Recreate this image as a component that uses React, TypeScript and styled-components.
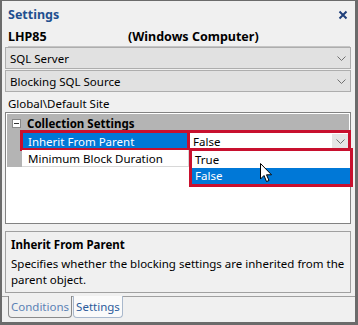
import React from "react";
import styled, { createGlobalStyle } from "styled-components";

const Global = createGlobalStyle`
  html, body { margin: 0; padding: 0; background: #f0f0f0; }
  * { box-sizing: border-box; }
  body { font-family: "Noto Sans", "Open Sans", sans-serif; font-size: 11.5px; color: #000; }
`;

const RED = "#c8102e";
const BLUE = "#0078d7";

const Frame = styled.div`
  position: relative;
  width: 358px;
  height: 325px;
  background: #f0f0f0;
  border-style: solid;
  border-color: #6b6b6b;
  border-width: 1px 3px 3px 2px;
  display: flex;
  flex-direction: column;
  overflow: hidden;
`;

const TitleBar = styled.div`
  height: 26px;
  display: flex;
  align-items: center;
  justify-content: space-between;
  padding: 1px 7px 0 6px;
`;

const Title = styled.div`
  color: #1f4f8f;
  font-weight: bold;
  font-size: 12.5px;
`;

const Close = styled.div`
  width: 10px;
  height: 10px;
  display: flex;
`;

const Machine = styled.div`
  margin: 0 5px 0 6px;
  height: 20px;
  display: flex;
  align-items: center;
  font-weight: bold;
  font-size: 12.5px;
  border-bottom: 1px solid #c4c4c4;
`;

const MachineName = styled.span`
  width: 120px;
`;

const Combo = styled.div`
  margin: 0 4px 1px 3px;
  height: 22px;
  background: #e1e1e1;
  border: 1px solid #adadad;
  display: flex;
  align-items: center;
  justify-content: space-between;
  padding: 0 4px 0 4px;
  &:first-of-type { margin-top: 2px; }
`;

const Chevron = ({ color = "#707070" }: { color?: string }) => (
  <svg width="9" height="5" viewBox="0 0 9 5">
    <path d="M0.5 0.5 L4.5 4.5 L8.5 0.5" fill="none" stroke={color} strokeWidth="1" />
  </svg>
);

const Path = styled.div`
  height: 19px;
  padding-left: 6px;
  padding-top: 2px;
  display: flex;
  align-items: center;
  font-size: 11.5px;
`;

const Grid = styled.div`
  position: relative;
  margin: 0 4px 0 3px;
  height: 112px;
  background: #fff;
  border: 1px solid #828282;
  display: flex;
  flex-direction: column;
`;

const Category = styled.div`
  height: 19px;
  background: #b4b4b4;
  display: flex;
  align-items: center;
  font-weight: bold;
  margin: 1px 1px 0 1px;
`;

const Toggle = styled.div`
  width: 9px;
  height: 9px;
  margin: 0 6px 0 5px;
  background: #fff;
  border: 1px solid #888;
  display: flex;
  align-items: center;
  justify-content: center;
  &::after { content: ""; width: 5px; height: 1px; background: #333; }
`;

const Row = styled.div`
  height: 17px;
  display: flex;
  margin: 0 1px;
`;

const Gutter = styled.div`
  width: 15px;
  background: #b4b4b4;
`;

const Label = styled.div<{ $selected?: boolean }>`
  position: relative;
  width: 166px;
  padding-left: 6px;
  display: flex;
  align-items: center;
  background: ${(p) => (p.$selected ? BLUE : "#fff")};
  color: ${(p) => (p.$selected ? "#fff" : "#000")};
  border-bottom: 1px solid ${(p) => (p.$selected ? BLUE : "#d8d8d8")};
`;

const Value = styled.div`
  position: relative;
  flex: 1;
  display: flex;
  align-items: center;
  justify-content: space-between;
  padding-left: 4px;
  background: #fff;
  border-bottom: 1px solid #d8d8d8;
  border-left: 1px solid #d8d8d8;
`;

const DropButton = styled.div`
  width: 16px;
  height: 15px;
  background: #e5e5e5;
  display: flex;
  align-items: center;
  justify-content: center;
  margin-right: 1px;
`;

const Highlight = styled.div`
  position: absolute;
  inset: -3px -2px -2px -2px;
  border: 3px solid ${RED};
  pointer-events: none;
`;

const List = styled.div`
  position: absolute;
  left: 183px;
  top: 35px;
  width: 164px;
  height: 39px;
  border: 3px solid ${RED};
  background: #fff;
  display: flex;
  flex-direction: column;
  z-index: 2;
`;

const Option = styled.div<{ $active?: boolean }>`
  flex: 1;
  display: flex;
  align-items: center;
  padding-left: 3px;
  background: ${(p) => (p.$active ? BLUE : "#fff")};
  color: ${(p) => (p.$active ? "#fff" : "#000")};
`;

const Cursor = styled.svg`
  position: absolute;
  left: 258px;
  top: 162px;
  z-index: 3;
`;

const Desc = styled.div`
  margin: 7px 4px 0 3px;
  height: 62px;
  border: 1px solid #a0a0a0;
  padding: 5px 5px 0 5px;
  line-height: 16px;
`;

const DescTitle = styled.div`
  font-weight: bold;
  margin-bottom: 3px;
`;

const TabStrip = styled.div`
  margin-top: 3px;
  border-top: 1px solid #a0a0a0;
  display: flex;
  padding-left: 6px;
  gap: 1px;
`;

const Tab = styled.div<{ $active?: boolean }>`
  height: 22px;
  margin-top: -1px;
  padding: 0 2px;
  display: flex;
  align-items: center;
  border: 1px solid #9a9a9a;
  border-top: none;
  border-radius: 0 0 4px 4px;
  background: ${(p) => (p.$active ? "#fafafa" : "#f0f0f0")};
  color: ${(p) => (p.$active ? "#2a5a9a" : "#5b82b5")};
  border-color: ${(p) => (p.$active ? "#a9b8cc" : "#8a8a8a")};
`;

export default function App() {
  return (
    <>
      <Global />
      <Frame>
        <TitleBar>
          <Title>Settings</Title>
          <Close>
            <svg width="10" height="10" viewBox="0 0 10 10">
              <path d="M1.5 1.5 L8.5 8.5 M8.5 1.5 L1.5 8.5" stroke="#1f3f7a" strokeWidth="2" />
            </svg>
          </Close>
        </TitleBar>
        <Machine>
          <MachineName>LHP85</MachineName>
          <span>(Windows Computer)</span>
        </Machine>
        <Combo>
          <span>SQL Server</span>
          <Chevron />
        </Combo>
        <Combo>
          <span>Blocking SQL Source</span>
          <Chevron />
        </Combo>
        <Path>Global\Default Site</Path>
        <Grid>
          <Category>
            <Toggle />
            Collection Settings
          </Category>
          <Row>
            <Gutter />
            <Label $selected>
              Inherit From Parent
              <Highlight />
            </Label>
            <Value>
              False
              <DropButton>
                <Chevron />
              </DropButton>
              <Highlight />
            </Value>
          </Row>
          <Row>
            <Gutter />
            <Label>Minimum Block Duration</Label>
            <Value />
          </Row>
          <List>
            <Option>True</Option>
            <Option $active>False</Option>
          </List>
        </Grid>
        <Desc>
          <DescTitle>Inherit From Parent</DescTitle>
          Specifies whether the blocking settings are inherited from the parent object.
        </Desc>
        <TabStrip>
          <Tab>Conditions</Tab>
          <Tab $active>Settings</Tab>
        </TabStrip>
        <Cursor width="13" height="20" viewBox="0 0 13 20">
          <path d="M0.5 0.5 L0.5 16 L4 12.5 L6.5 18.5 L9 17.5 L6.5 11.8 L11.5 11.8 Z" fill="#fff" stroke="#000" strokeWidth="1" />
        </Cursor>
      </Frame>
    </>
  );
}
